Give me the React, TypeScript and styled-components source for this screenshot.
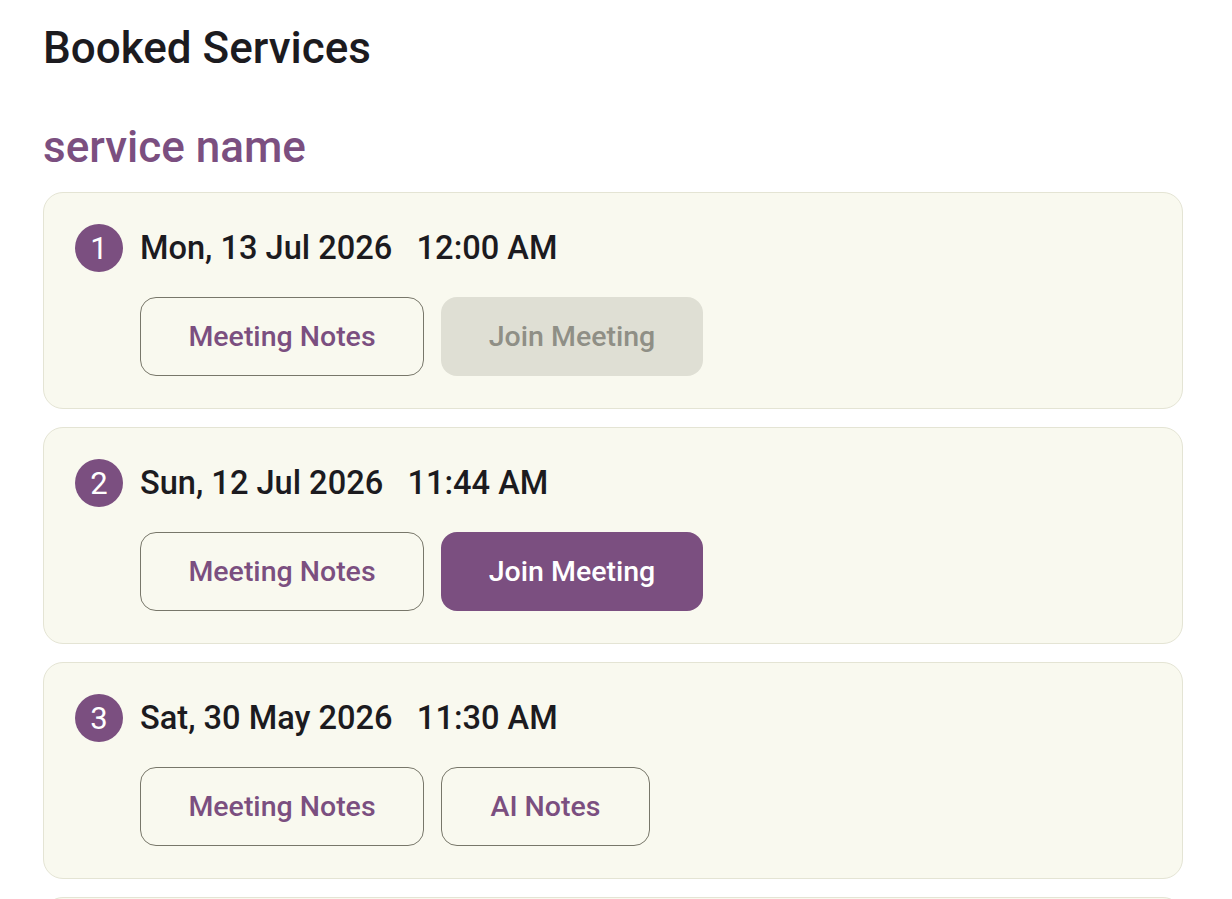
import React from "react";
import styled, { createGlobalStyle } from "styled-components";

const Global = createGlobalStyle`
  html, body { margin: 0; padding: 0; background: #ffffff; }
  body { font-family: Roboto, "Noto Sans", "Liberation Sans", sans-serif; color: #1c1b1f; }
`;

const Page = styled.main`
  padding: 22px 49px 0 43px;
  display: flex;
  flex-direction: column;
`;

const Title = styled.h1`
  margin: 0;
  font-size: 44px;
  line-height: 52px;
  font-weight: 500;
  color: #1c1b1f;
`;

const ServiceName = styled.h2`
  margin: 47px 0 19px;
  font-size: 44px;
  line-height: 52px;
  font-weight: 500;
  color: #7b4f80;
`;

const List = styled.div`
  display: flex;
  flex-direction: column;
  gap: 18px;
`;

const Card = styled.section`
  background: #f9f9ef;
  border: 1px solid #e4e4d4;
  border-radius: 20px;
  padding: 31px 31px 32px 31px;
  display: flex;
  flex-direction: column;
  gap: 25px;
`;

const Header = styled.div`
  display: flex;
  align-items: center;
  gap: 17px;
`;

const Badge = styled.span`
  width: 48px;
  height: 48px;
  border-radius: 50%;
  background: #7b4f80;
  color: #ffffff;
  display: flex;
  align-items: center;
  justify-content: center;
  font-size: 31px;
  font-weight: 400;
`;

const DateText = styled.span`
  font-size: 32.6px;
  font-weight: 500;
  color: #1c1b1f;
  white-space: pre;
`;

const Actions = styled.div`
  display: flex;
  gap: 17px;
  padding-left: 65px;
`;

type Variant = "outline" | "primary" | "disabled";

const Button = styled.button<{ $variant: Variant; $width: number }>`
  box-sizing: border-box;
  width: ${(p) => p.$width}px;
  height: 79px;
  border-radius: 16px;
  font-family: Roboto, "Noto Sans", "Liberation Sans", sans-serif;
  font-size: 28.5px;
  font-weight: 500;
  cursor: pointer;
  border: ${(p) => (p.$variant === "outline" ? "1.5px solid #78776a" : "none")};
  background: ${(p) =>
    p.$variant === "primary" ? "#7b4f80" : p.$variant === "disabled" ? "#dfdfd4" : "transparent"};
  color: ${(p) =>
    p.$variant === "primary" ? "#ffffff" : p.$variant === "disabled" ? "#8f8f86" : "#7b4f80"};
`;

type Booking = {
  date: string;
  time: string;
  second: { label: string; variant: Variant; width: number };
};

const bookings: Booking[] = [
  { date: "Mon, 13 Jul 2026", time: "12:00 AM", second: { label: "Join Meeting", variant: "disabled", width: 262 } },
  { date: "Sun, 12 Jul 2026", time: "11:44 AM", second: { label: "Join Meeting", variant: "primary", width: 262 } },
  { date: "Sat, 30 May 2026", time: "11:30 AM", second: { label: "AI Notes", variant: "outline", width: 209 } },
  { date: "Fri, 29 May 2026", time: "10:00 AM", second: { label: "AI Notes", variant: "outline", width: 209 } },
];

export default function App() {
  return (
    <>
      <Global />
      <Page>
        <Title>Booked Services</Title>
        <ServiceName>service name</ServiceName>
        <List>
          {bookings.map((b, i) => (
            <Card key={i}>
              <Header>
                <Badge>{i + 1}</Badge>
                <DateText>{`${b.date}   ${b.time}`}</DateText>
              </Header>
              <Actions>
                <Button $variant="outline" $width={284}>Meeting Notes</Button>
                <Button $variant={b.second.variant} $width={b.second.width}>{b.second.label}</Button>
              </Actions>
            </Card>
          ))}
        </List>
      </Page>
    </>
  );
}
